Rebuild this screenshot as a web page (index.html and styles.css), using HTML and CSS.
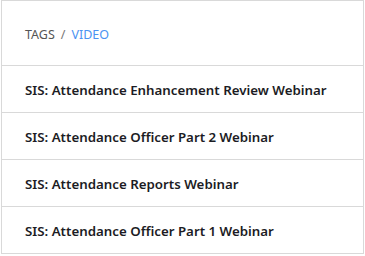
FILE: index.html
```html
<!DOCTYPE html>
<html lang="en">
<head>
    <meta charset="UTF-8">
    <meta name="viewport" content="width=device-width, initial-scale=1.0">
    <title>Tags - Video</title>
    <link rel="stylesheet" href="styles.css">
</head>
<body>
    <div class="panel">
        <div class="breadcrumb">
            <span class="crumb">TAGS</span>
            <span class="sep">/</span>
            <span class="crumb active">VIDEO</span>
        </div>
        <ul class="post-list">
            <li class="post"><a href="#">SIS: Attendance Enhancement Review Webinar</a></li>
            <li class="post"><a href="#">SIS: Attendance Officer Part 2 Webinar</a></li>
            <li class="post"><a href="#">SIS: Attendance Reports Webinar</a></li>
            <li class="post"><a href="#">SIS: Attendance Officer Part 1 Webinar</a></li>
        </ul>
    </div>
</body>
</html>
```

FILE: styles.css
```css
body {
    margin: 0;
    background-color: white;
    font-family: "Noto Sans", "Open Sans", sans-serif;
}
.panel {
    width: 361px;
    margin-left: 1px;
    border: 1px solid #d9d9d9;
    border-bottom: none;
}
.breadcrumb {
    height: 65px;
    box-sizing: border-box;
    padding: 2px 0 0 23px;
    display: flex;
    align-items: center;
    gap: 6px;
    font-size: 12.5px;
    color: #555;
    border-bottom: 1px solid #d9d9d9;
}
.sep {
    color: #777;
}
.active {
    color: #4b93f2;
}
.post-list {
    list-style: none;
    margin: 0;
    padding: 0;
}
.post {
    height: 47px;
    box-sizing: border-box;
    display: flex;
    align-items: center;
    padding: 2px 0 0 23px;
    border-bottom: 1px solid #d9d9d9;
}
.post a {
    color: #1c1c24;
    text-decoration: none;
    font-size: 13.3px;
    font-weight: 600;
}
```
